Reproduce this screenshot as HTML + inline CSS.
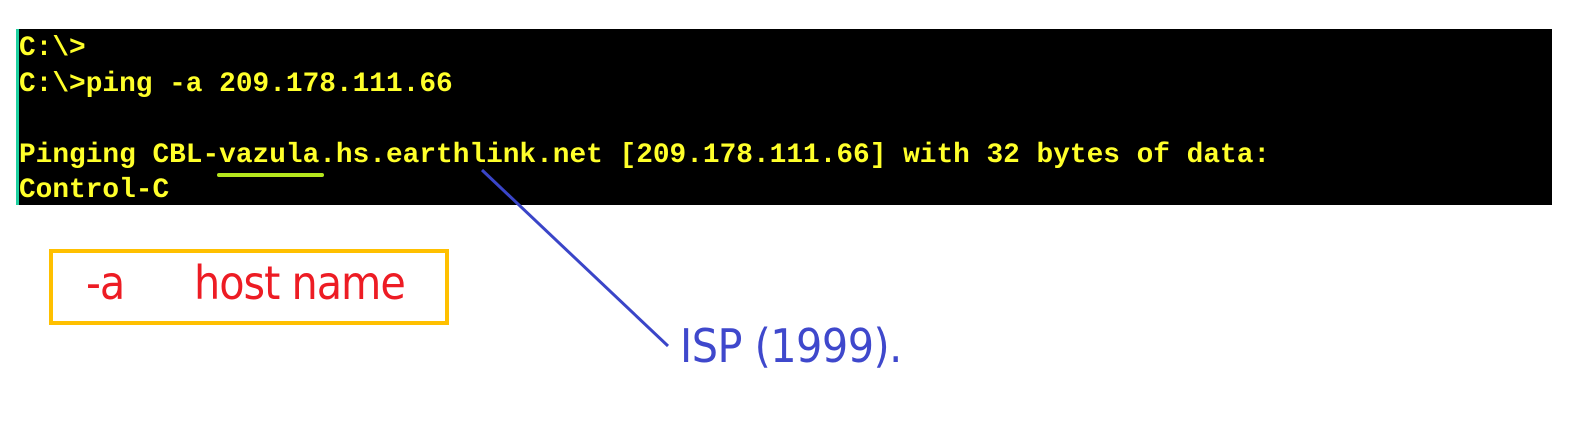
<!DOCTYPE html>
<html><head><style>
body{margin:0;width:1588px;height:444px;background:#fff;position:relative;overflow:hidden}
.term{position:absolute;left:16px;top:29px;width:1536px;height:176px;background:#000;border-left:3px solid #1fd0a0;box-sizing:border-box;overflow:hidden}
.term pre{margin:0;position:absolute;left:0;top:2px;font:bold 27.8px/35.5px "Liberation Mono",monospace;color:#ffff2a;white-space:pre}
.box{position:absolute;left:49px;top:249px;width:400px;height:76px;border:4px solid #ffc000;box-sizing:border-box}
.red{position:absolute;top:255px;font:46px/56px "DejaVu Sans Condensed","Liberation Sans",sans-serif;color:#ed1c24;letter-spacing:-1px}
.isp{position:absolute;left:680px;top:318px;font:46px/56px "DejaVu Sans Condensed","Liberation Sans",sans-serif;color:#3f48cc;letter-spacing:-0.5px}
</style></head><body>
<div class="term"><pre>C:\>
C:\>ping -a 209.178.111.66

Pinging CBL-vazula.hs.earthlink.net [209.178.111.66] with 32 bytes of data:
Control-C</pre></div>
<svg width="1588" height="444" style="position:absolute;left:0;top:0">
<line x1="219" y1="175" x2="322" y2="175" stroke="#b5e61d" stroke-width="4" stroke-linecap="round"/>
<line x1="482" y1="170" x2="668" y2="346" stroke="#3a45c8" stroke-width="3"/>
</svg>
<div class="box"></div>
<div class="red" style="left:86px">-a</div>
<div class="red" style="left:194px">host name</div>
<div class="isp">ISP (1999).</div>
</body></html>
